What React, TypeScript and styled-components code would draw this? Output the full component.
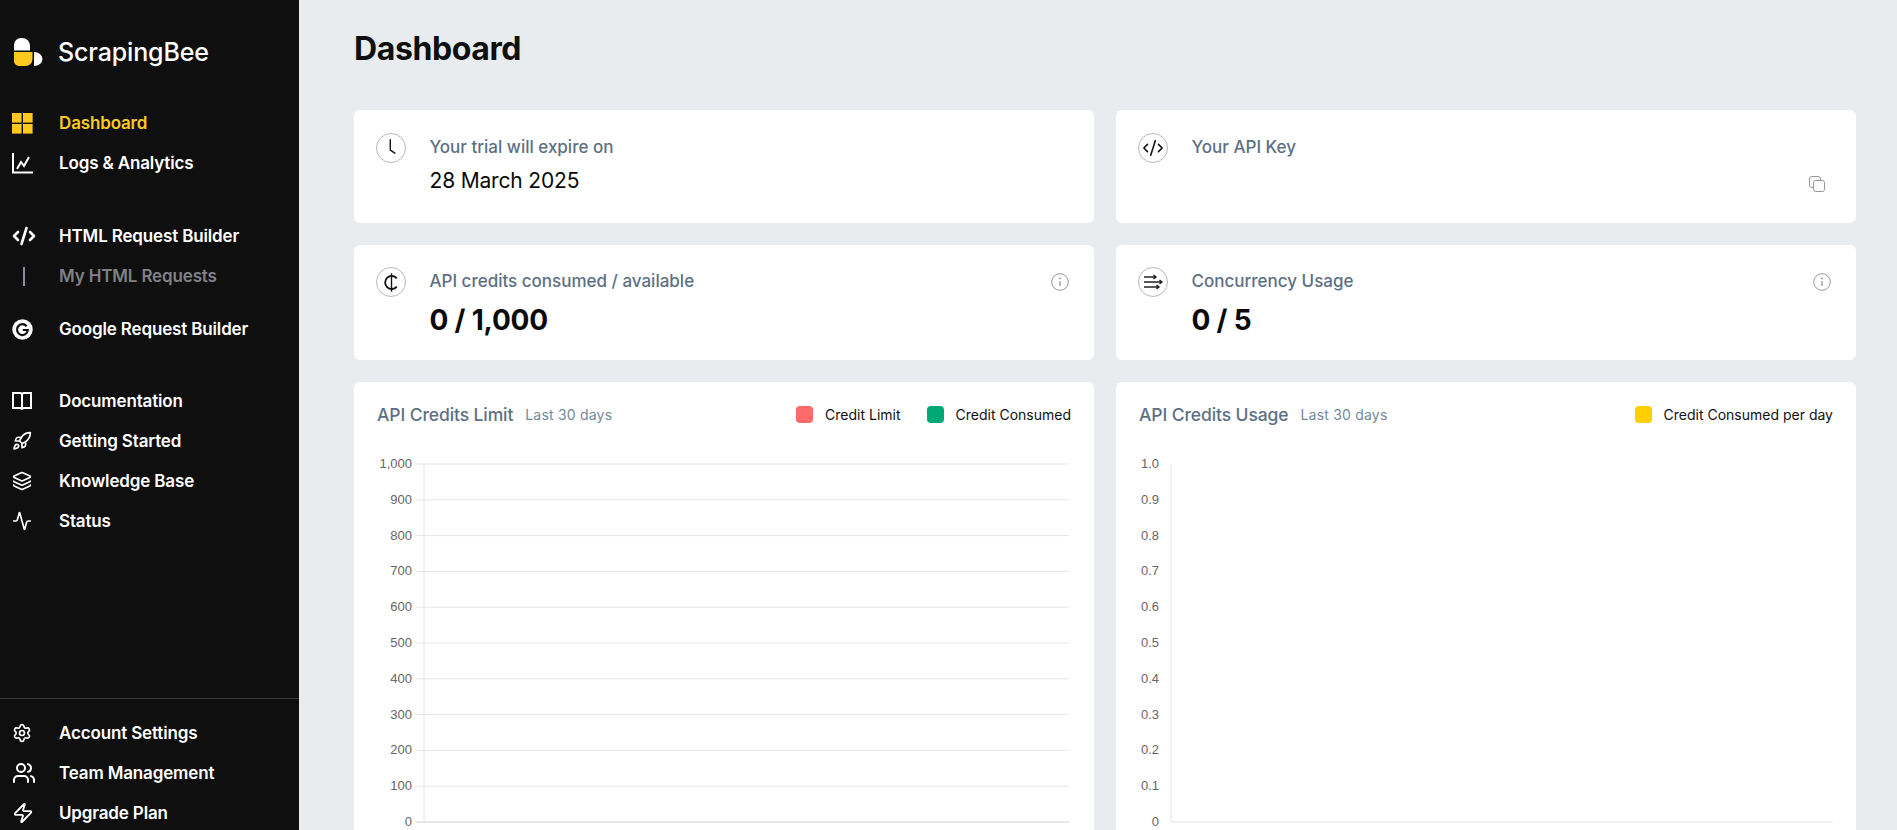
import React from 'react';
import styled, { createGlobalStyle } from 'styled-components';
import { Activity, CodeXml, Layers, Rocket, Settings, Users, Zap } from 'lucide-react';

const FONT = '"Inter", "Noto Sans", sans-serif';

const GlobalStyle = createGlobalStyle`
  html, body {
    margin: 0;
    padding: 0;
    height: 830px;
    overflow: hidden;
    background: #e8ecee;
    font-family: ${FONT};
  }
`;

// == layout =======================================================================================
const Root = styled.div`
  display: flex;
  width: 1897px;
  height: 830px;
  overflow: hidden;
`;

const Sidebar = styled.nav`
  flex: 0 0 299px;
  height: 830px;
  overflow: hidden;
  background: #0f0f0f;
  color: #fff;
`;

const Main = styled.main`
  flex: 1;
  min-width: 0;
  padding: 0 41px 0 55px;
`;

const Brand = styled.div`
  display: flex;
  align-items: center;
  height: 103px;
  padding-left: 13px;
  gap: 15px;
  box-sizing: border-box;
`;

const BrandName = styled.span`
  font-size: 25px;
  font-weight: 500;
  letter-spacing: -0.15px;
`;

const NavGroup = styled.div<{ $top?: number }>`
  margin-top: ${({ $top }) => $top ?? 0}px;
`;

const BottomGroup = styled.div`
  margin-top: 157px;
  padding-top: 14px;
  border-top: 1px solid #3a3a3a;
`;

const NavRow = styled.a<{ $tone?: 'active' | 'muted' }>`
  display: flex;
  align-items: center;
  height: 40px;
  padding-left: 12px;
  font-size: 17px;
  font-weight: 600;
  letter-spacing: -0.15px;
  color: ${({ $tone }) => ($tone === 'active' ? '#fdc91f' : $tone === 'muted' ? '#808186' : '#fff')};
`;

const NavIcon = styled.span`
  flex: 0 0 47px;
  display: flex;
  align-items: center;
`;

const SubBar = styled.span`
  width: 2px;
  height: 19px;
  margin-left: 11px;
  background: #8d8a9c;
`;

const Title = styled.h1`
  margin: 0;
  height: 110px;
  padding-top: 31px;
  box-sizing: border-box;
  font-size: 32px;
  line-height: 36px;
  font-weight: 700;
  letter-spacing: -0.4px;
  color: #0f0f0f;
`;

const Grid = styled.div`
  display: grid;
  grid-template-columns: 740px 740px;
  column-gap: 22px;
  row-gap: 22px;
`;

const Card = styled.section<{ $height: number; $top: number }>`
  position: relative;
  display: flex;
  gap: 23.5px;
  height: ${({ $height }) => $height}px;
  padding: ${({ $top }) => $top}px 22px 0;
  box-sizing: border-box;
  background: #fff;
  border-radius: 6px;
`;

const IconCircle = styled.span`
  flex: 0 0 30px;
  width: 30px;
  height: 30px;
  display: flex;
  align-items: center;
  justify-content: center;
  box-sizing: border-box;
  border: 1.5px solid #b8b8b8;
  border-radius: 50%;
  color: #111;
`;

const CardBody = styled.div`
  display: flex;
  flex-direction: column;
  gap: 9px;
`;

const CardLabel = styled.div`
  font-size: 17px;
  line-height: 24px;
  font-weight: 500;
  letter-spacing: 0;
  color: #5d7083;
  margin-top: 2px;
`;

const DateValue = styled.div`
  margin-top: 1px;
  font-size: 21px;
  line-height: 24px;
  color: #0a0a0a;
  letter-spacing: -0.17px;
`;

const CountValue = styled.div`
  margin-top: 3px;
  font-size: 28px;
  line-height: 30px;
  font-weight: 700;
  letter-spacing: -0.2px;
  color: #0a0a0a;
`;

const CornerAction = styled.span<{ $bottom?: boolean }>`
  position: absolute;
  right: 25px;
  color: #969696;
  display: flex;
  ${({ $bottom }) => ($bottom ? 'top: 66px; right: 31px;' : 'top: 28px;')}
`;

const ChartCard = styled.section`
  height: 480px;
  padding: 20px 23px 0;
  box-sizing: border-box;
  background: #fff;
  border-radius: 6px;
`;

const ChartHeader = styled.header`
  display: flex;
  align-items: center;
  height: 24px;
  margin-bottom: 36px;
`;

const ChartTitle = styled.h2`
  margin: 0;
  font-size: 17.5px;
  font-weight: 500;
  letter-spacing: -0.1px;
  color: #5d7083;
`;

const ChartRange = styled.span`
  margin-left: 12px;
  font-size: 14px;
  letter-spacing: 0.2px;
  color: #74889a;
`;

const Legend = styled.div`
  margin-left: auto;
  display: flex;
  gap: 26px;
`;

const LegendItem = styled.span`
  display: flex;
  align-items: center;
  gap: 12px;
  font-size: 14px;
  color: #111;
`;

const Swatch = styled.i<{ $color: string }>`
  width: 17px;
  height: 17px;
  border-radius: 4px;
  background: ${({ $color }) => $color};
`;

const PlotSvg = styled.svg`
  display: block;
  width: 694px;
  height: 370px;
  overflow: visible;
`;

const TickLabel = styled.text`
  font-family: "Liberation Sans", Arial, sans-serif;
  font-size: 13px;
  fill: #666;
`;

// == icons ========================================================================================
const GridIcon = () => (
  <svg width="21" height="21" viewBox="0 0 21 21" fill="#fdc91f">
    <rect x="0" y="0" width="9.6" height="9.6" />
    <rect x="11" y="0" width="9.6" height="9.6" />
    <rect x="0" y="11" width="9.6" height="9.6" />
    <rect x="11" y="11" width="9.6" height="9.6" />
  </svg>
);

const LogsIcon = () => (
  <svg width="21" height="21" viewBox="0 0 21 21" fill="none" stroke="#fff" strokeWidth="2">
    <path d="M1 0v19.500h20" />
    <path d="M5 16l4-7 3 4 5-9" />
  </svg>
);

const GoogleIcon = () => (
  <svg width="21" height="21" viewBox="0 0 21 21">
    <circle cx="10.500" cy="10.500" r="10.200" fill="#fff" />
    <path d="M14.600 7.200A5.400 5.400 0 1 0 15.800 11H10.800" fill="none" stroke="#0f0f0f" strokeWidth="2.200" />
  </svg>
);

const BookIcon = () => (
  <svg width="20" height="19" viewBox="0 0 20 19" fill="none" stroke="#fff" strokeWidth="2">
    <path d="M1 1h7a2 2 0 0 1 2 2v14.500c0-1-1-1.500-2-1.500H1z" />
    <path d="M19 1h-7a2 2 0 0 0-2 2v14.500c0-1 1-1.500 2-1.500h7z" />
  </svg>
);

const Logo = () => (
  <svg width="30" height="30" viewBox="0 0 30 30">
    <path fill="#fff" d="M1 13.500V8a7 7 0 0 1 7-7h1a8 8 0 0 1 8 8v4.500z" />
    <path fill="#fdc91f" d="M1 15h18.500v7a7 7 0 0 1-7 7H6a5 5 0 0 1-5-5z" />
    <path fill="#fff" d="M21 15a8.500 7 0 0 1 0 14z" />
  </svg>
);

const ClockHands = () => (
  <svg width="20" height="20" viewBox="0 0 20 20" fill="none" stroke="#111" strokeWidth="1.400">
    <path d="M9.300 1.300V12l5 3.300" />
  </svg>
);

const CoinIcon = () => (
  <svg width="23" height="23" viewBox="0 0 20 20" fill="none" stroke="#111" strokeWidth="1.600">
    <path d="M14.600 6.400A5.700 5.700 0 1 0 14.600 13.600" />
    <path d="M10 2v16" strokeWidth="1.200" />
  </svg>
);

const FlowIcon = () => (
  <svg width="22" height="22" viewBox="0 0 22 22" fill="none" stroke="#222" strokeWidth="1.400">
    <path d="M2 6h12M11.500 4l2.500 2-2.500 2" />
    <path d="M2 11h18M17.500 9l2.500 2-2.500 2" />
    <path d="M2 16h15M14.500 14l2.500 2-2.500 2" />
  </svg>
);

const CopyIcon = () => (
  <svg width="16" height="16" viewBox="0 0 16 16" fill="none" stroke="currentColor" strokeWidth="1">
    <rect x="4.500" y="4.500" width="11" height="11" rx="2" />
    <path d="M4.500 11.500H3a2.500 2.500 0 0 1-2.500-2.500V3A2.500 2.500 0 0 1 3 .5h6a2.500 2.500 0 0 1 2.500 2.500v1.500" />
  </svg>
);

const InfoIcon = () => (
  <svg width="18" height="18" viewBox="0 0 18 18" fill="none" stroke="currentColor" strokeWidth="1">
    <circle cx="9" cy="9" r="8.300" />
    <path d="M9 8v5" strokeWidth="1.300" />
    <circle cx="9" cy="5.500" r=".6" fill="currentColor" />
  </svg>
);

// == chart ========================================================================================
interface PlotProps {
  labels: string[];
  axisX: number;
  labelX: number;
  rightX: number;
  gridLines: boolean;
}

const TOP = 2;
const STEP = 35.8;

const Plot = ({ labels, axisX, labelX, rightX, gridLines }: PlotProps): JSX.Element => (
  <PlotSvg>
    {labels.map((label, i) => {
      const y = TOP + i * STEP;
      return (
        <g key={label}>
          {gridLines && (
            <line x1={axisX - 8} x2={rightX} y1={y} y2={y} stroke={i === labels.length - 1 ? '#cfcfcf' : '#e6e6e6'} />
          )}
          <TickLabel x={labelX} y={y + 4} textAnchor="end">{label}</TickLabel>
        </g>
      );
    })}
    <line x1={axisX} x2={axisX} y1={TOP} y2={TOP + STEP * (labels.length - 1)} stroke="#e4e4e4" />
    {!gridLines && (
      <line x1={axisX} x2={rightX} y1={TOP + STEP * (labels.length - 1)} y2={TOP + STEP * (labels.length - 1)} stroke="#e4e4e4" />
    )}
  </PlotSvg>
);

// == element ======================================================================================
const COUNT_LABELS = ['1,000', '900', '800', '700', '600', '500', '400', '300', '200', '100', '0'];
const RATIO_LABELS = ['1.0', '0.9', '0.8', '0.7', '0.6', '0.5', '0.4', '0.3', '0.2', '0.1', '0'];

export default function App(): JSX.Element {
  return (
    <Root>
      <GlobalStyle />
      <Sidebar>
        <Brand>
          <Logo />
          <BrandName>ScrapingBee</BrandName>
        </Brand>
        <NavGroup>
          <NavRow $tone="active"><NavIcon><GridIcon /></NavIcon>Dashboard</NavRow>
          <NavRow><NavIcon><LogsIcon /></NavIcon>Logs &amp; Analytics</NavRow>
        </NavGroup>
        <NavGroup $top={33}>
          <NavRow><NavIcon><CodeXml size={24} strokeWidth={2.6} /></NavIcon>HTML Request Builder</NavRow>
          <NavRow $tone="muted"><NavIcon><SubBar /></NavIcon>My HTML Requests</NavRow>
        </NavGroup>
        <NavGroup $top={13}>
          <NavRow><NavIcon><GoogleIcon /></NavIcon>Google Request Builder</NavRow>
        </NavGroup>
        <NavGroup $top={32}>
          <NavRow><NavIcon><BookIcon /></NavIcon>Documentation</NavRow>
          <NavRow><NavIcon><Rocket size={20} strokeWidth={2} /></NavIcon>Getting Started</NavRow>
          <NavRow><NavIcon><Layers size={20} strokeWidth={2} /></NavIcon>Knowledge Base</NavRow>
          <NavRow><NavIcon><Activity size={20} strokeWidth={2} /></NavIcon>Status</NavRow>
        </NavGroup>
        <BottomGroup>
          <NavRow><NavIcon><Settings size={20} strokeWidth={2} /></NavIcon>Account Settings</NavRow>
          <NavRow><NavIcon><Users size={24} strokeWidth={2} /></NavIcon>Team Management</NavRow>
          <NavRow><NavIcon><Zap size={22} strokeWidth={2} /></NavIcon>Upgrade Plan</NavRow>
        </BottomGroup>
      </Sidebar>
      <Main>
        <Title>Dashboard</Title>
        <Grid>
          <Card $height={113} $top={23}>
            <IconCircle><ClockHands /></IconCircle>
            <CardBody>
              <CardLabel>Your trial will expire on</CardLabel>
              <DateValue>28 March 2025</DateValue>
            </CardBody>
          </Card>
          <Card $height={113} $top={23}>
            <IconCircle><CodeXml size={22} strokeWidth={1.7} /></IconCircle>
            <CardBody>
              <CardLabel>Your API Key</CardLabel>
            </CardBody>
            <CornerAction $bottom><CopyIcon /></CornerAction>
          </Card>
          <Card $height={115} $top={22}>
            <IconCircle><CoinIcon /></IconCircle>
            <CardBody>
              <CardLabel>API credits consumed / available</CardLabel>
              <CountValue>0 / 1,000</CountValue>
            </CardBody>
            <CornerAction><InfoIcon /></CornerAction>
          </Card>
          <Card $height={115} $top={22}>
            <IconCircle><FlowIcon /></IconCircle>
            <CardBody>
              <CardLabel>Concurrency Usage</CardLabel>
              <CountValue>0 / 5</CountValue>
            </CardBody>
            <CornerAction><InfoIcon /></CornerAction>
          </Card>
          <ChartCard>
            <ChartHeader>
              <ChartTitle>API Credits Limit</ChartTitle>
              <ChartRange>Last 30 days</ChartRange>
              <Legend>
                <LegendItem><Swatch $color="#fd6a6a" />Credit Limit</LegendItem>
                <LegendItem><Swatch $color="#00a878" />Credit Consumed</LegendItem>
              </Legend>
            </ChartHeader>
            <Plot labels={COUNT_LABELS} axisX={47} labelX={35} rightX={692} gridLines />
          </ChartCard>
          <ChartCard>
            <ChartHeader>
              <ChartTitle>API Credits Usage</ChartTitle>
              <ChartRange>Last 30 days</ChartRange>
              <Legend>
                <LegendItem><Swatch $color="#ffcf00" />Credit Consumed per day</LegendItem>
              </Legend>
            </ChartHeader>
            <Plot labels={RATIO_LABELS} axisX={32} labelX={20} rightX={694} gridLines={false} />
          </ChartCard>
        </Grid>
      </Main>
    </Root>
  );
}
